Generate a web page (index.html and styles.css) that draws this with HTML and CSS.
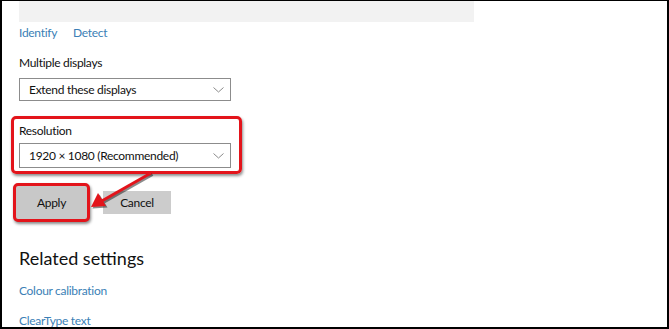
FILE: index.html
```html
<!DOCTYPE html>
<html lang="en">
<head>
    <meta charset="UTF-8">
    <meta name="viewport" content="width=device-width, initial-scale=1.0">
    <title>Display settings</title>
    <link rel="stylesheet" href="styles.css">
</head>
<body>
    <div class="preview"></div>

    <div class="links">
        <a href="#">Identify</a>
        <a href="#">Detect</a>
    </div>

    <div class="label label-multi">Multiple displays</div>
    <div class="select select-multi">
        <span>Extend these displays</span>
        <svg class="chevron" width="11" height="6" viewBox="0 0 11 6"><path d="M0.5 0.5 L5.5 5 L10.5 0.5" fill="none" stroke="#8a8a8a" stroke-width="1"/></svg>
    </div>

    <div class="res-box">
        <div class="label">Resolution</div>
        <div class="select select-res">
            <span>1920 × 1080 (Recommended)</span>
            <svg class="chevron" width="11" height="6" viewBox="0 0 11 6"><path d="M0.5 0.5 L5.5 5 L10.5 0.5" fill="none" stroke="#8a8a8a" stroke-width="1"/></svg>
        </div>
    </div>

    <div class="buttons">
        <button class="btn btn-apply">Apply</button>
        <button class="btn btn-cancel">Cancel</button>
    </div>

    <h2 class="related">Related settings</h2>
    <a class="setting-link link-colour" href="#">Colour calibration</a>
    <a class="setting-link link-cleartype" href="#">ClearType text</a>

    <!-- callout arrow drawn over the page -->
    <svg class="arrow" width="669" height="329" viewBox="0 0 669 329">
        <g transform="translate(1.5,1.5)" opacity="0.45">
            <line x1="151" y1="173" x2="100" y2="202" stroke="#000" stroke-width="3"/>
            <polygon points="91,207 98,193 106,206" fill="#000"/>
        </g>
        <line x1="151" y1="173" x2="100" y2="202" stroke="#e3141b" stroke-width="3"/>
        <polygon points="91,207 98,193 106,206" fill="#e3141b"/>
    </svg>
</body>
</html>
```

FILE: styles.css
```css
body {
    margin: 0;
    height: 329px;
    box-sizing: border-box;
    border: 2px solid #000;
    border-top-width: 1px;
    padding-left: 17px;
    overflow: hidden;
    position: relative;
    background: #fff;
    font-family: Lato, "Open Sans", sans-serif;
    font-size: 12px;
    letter-spacing: -0.3px;
    color: #111;
}

a {
    color: #3b7fb6;
    text-decoration: none;
}

.preview {
    width: 455px;
    height: 21px;
    background: #f2f2f2;
}

.links {
    margin-top: 3px;
    line-height: 16px;
    display: flex;
    gap: 16px;
}

.label {
    line-height: 16px;
}

.label-multi {
    margin-top: 14px;
}

.select {
    width: 212px;
    box-sizing: border-box;
    border: 1.5px solid #8c8c8c;
    display: flex;
    align-items: center;
    justify-content: space-between;
    padding: 0 6px 0 9px;
    line-height: 16px;
    background: #fff;
}

.select-multi {
    margin-top: 7px;
    height: 23px;
}

.select-res {
    margin-top: 4px;
    height: 25px;
}

.chevron {
    display: block;
}

.res-box {
    width: fit-content;
    margin-top: 15px;
    margin-left: -8px;
    padding: 4px 8px 3px 5px;
    border: 3px solid #e3141b;
    border-radius: 5px;
    box-shadow: 1px 2px 3px rgba(0, 0, 0, 0.45);
}

.buttons {
    margin-top: 9px;
    display: flex;
    align-items: center;
}

.btn {
    font-family: inherit;
    font-size: 12px;
    letter-spacing: inherit;
    color: #111;
    background: #cccccc;
    border: none;
    padding: 0;
    cursor: pointer;
}

.btn-apply {
    width: 77px;
    height: 39px;
    margin-left: -6px;
    background: #c8c8c8;
    border: 3px solid #e3141b;
    border-radius: 5px;
    box-shadow: 1px 2px 3px rgba(0, 0, 0, 0.45);
}

.btn-cancel {
    width: 68px;
    height: 23px;
    margin-left: 13px;
}

.related {
    margin: 23px 0 0;
    font-size: 18px;
    font-weight: 400;
    letter-spacing: 0;
    line-height: 26px;
    color: #111;
}

.setting-link {
    display: block;
    line-height: 16px;
}

.link-colour {
    margin-top: 12px;
}

.link-cleartype {
    margin-top: 14px;
}

.arrow {
    position: absolute;
    left: -2px;
    top: -1px;
    pointer-events: none;
}
```
